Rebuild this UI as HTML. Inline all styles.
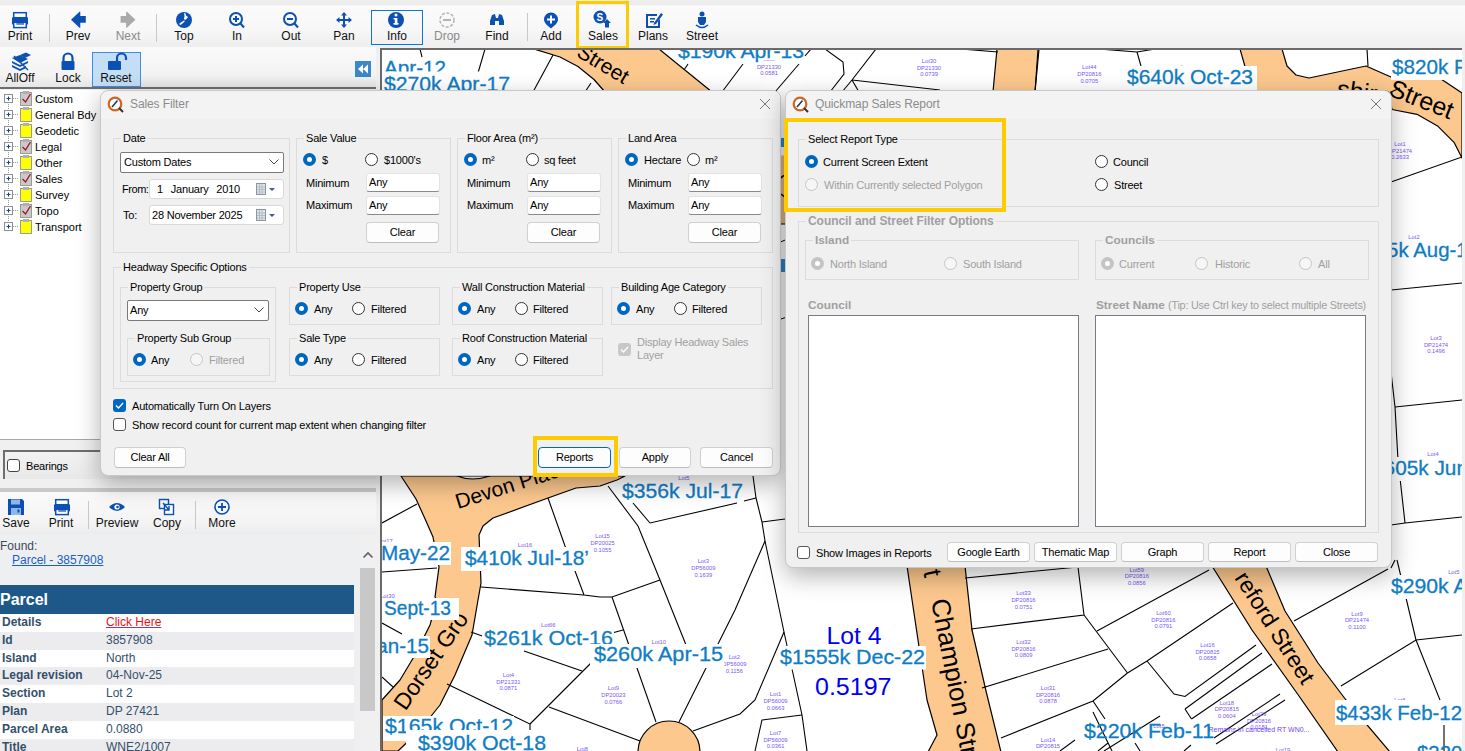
<!DOCTYPE html>
<html><head><meta charset="utf-8">
<style>
*{box-sizing:border-box;margin:0;padding:0}
html,body{width:1465px;height:751px;overflow:hidden;background:#f0f0f0;font-family:"Liberation Sans",sans-serif;font-size:12px;color:#000;position:relative}
.a{position:absolute}
.tb{left:0;top:0;width:1465px;height:47px;background:linear-gradient(#ededed 0,#ededed 5px,#fbfbfb 6px,#f7f7f7 30px,#efefef 46px)}
.ti{position:absolute;text-align:center;font-size:12px;color:#111}
.ti svg{position:absolute;left:50%;margin-left:-8px;top:12px}
.ti span{position:absolute;left:-30px;right:-30px;top:29px;text-align:center}
.sep{position:absolute;width:1px;background:#c8c8c8}
.map{left:380px;top:48px;width:1082px;height:703px;background:#fff;border-left:2px solid #6a6a6a;border-top:2px solid #6a6a6a;overflow:hidden}
.dlg{background:#f0f0f0;border:1px solid #c8c8c8;border-radius:8px;box-shadow:0 8px 24px rgba(0,0,0,.3)}
.grp{position:absolute;border:1px solid #dcdcdc}
.grp>b{position:absolute;top:-8px;left:7px;font-weight:normal;background:#f0f0f0;padding:0 2px;line-height:14px;white-space:nowrap;font-size:11px;letter-spacing:-0.2px}
.rad{position:absolute;width:13px;height:13px;border-radius:50%;border:1px solid #333;background:#fff}
.rad.on{border:4px solid #0067c0;background:#fff}
.rad.dis{border-color:#c4c4c4;background:#f6f6f6}
.rad.dison{border:4px solid #c4c4c4;background:#fff}
.lbl{position:absolute;white-space:nowrap;line-height:14px;font-size:11px;letter-spacing:-0.2px}
.btn{position:absolute;font-size:11px;letter-spacing:-0.2px;background:#fdfdfd;border:1px solid #d0d0d0;border-bottom-color:#bdbdbd;border-radius:4px;text-align:center;line-height:18px}
.inp{position:absolute;font-size:11px;letter-spacing:-0.2px;background:#fff;border:1px solid #e3e3e3;border-bottom:1px solid #8a8a8a;border-radius:3px;padding-left:2px;line-height:16px}
.dis{color:#a0a0a0}
.yel{position:absolute;border:3px solid #fccb00}
</style></head><body>

<!-- top toolbar -->
<div class="a tb"></div>
<!-- top toolbar items -->
<div class="a" style="left:0;top:0;width:1465px;height:47px">
<svg class="a" style="left:0;top:0" width="760" height="47" viewBox="0 0 760 47">
<g fill="#0c50b4">
<!-- print -->
<rect x="13.7" y="12.7" width="12.6" height="5" fill="#fff" stroke="#0c50b4" stroke-width="1.5"/>
<rect x="12" y="17.3" width="16" height="7.3" rx="0.8"/>
<rect x="13.7" y="22.3" width="12.6" height="5.3" fill="#fff" stroke="#0c50b4" stroke-width="1.5"/>
<rect x="16.3" y="23.3" width="7.7" height="1.3"/>
<!-- prev -->
<path d="M71,19.8 L79.5,11.8 L80.3,11.8 V16.1 H85.8 V22.7 H80.3 V27.7 L79.5,27.7 Z"/>
<!-- next -->
<path d="M135.4,19.8 L126.9,11.8 L126.1,11.8 V16.1 H120.6 V22.7 H126.1 V27.7 L126.9,27.7 Z" fill="#a9a9a9"/>
<!-- top -->
<circle cx="184" cy="20" r="8"/>
<path d="M184,13 L185.5,13.5 L186,15.5 L188,17 L186.5,19 L185,20 L184,19 L184.5,16 Z M185,21 L182.5,23.5 L180.5,25 L179,24 L181.5,22 L184,20.5 Z" fill="#fff"/>
<!-- in -->
<g fill="none" stroke="#0c50b4" stroke-width="2"><circle cx="236" cy="19" r="6"/><path d="M240.5,23.5 L244,27.5"/><path d="M236,16 V22 M233,19 H239"/></g>
<!-- out -->
<g fill="none" stroke="#0c50b4" stroke-width="2"><circle cx="290" cy="19" r="6"/><path d="M294.5,23.5 L298,27.5"/><path d="M287,19 H293"/></g>
<!-- pan -->
<g fill="none" stroke="#0c50b4" stroke-width="2"><path d="M344,14 V26 M338,20 H350"/></g>
<path d="M344,12 L347,15.5 L341,15.5 Z M344,28 L347,24.5 L341,24.5 Z M336,20 L339.5,17 L339.5,23 Z M352,20 L348.5,17 L348.5,23 Z"/>
<!-- info -->
<circle cx="396" cy="20" r="8"/>
<rect x="394.8" y="18" width="2.6" height="6.5" fill="#fff"/><rect x="393.5" y="23" width="5" height="1.6" fill="#fff"/><rect x="393.5" y="18" width="3" height="1.4" fill="#fff"/><circle cx="396" cy="15" r="1.5" fill="#fff"/>
<!-- drop -->
<circle cx="447" cy="20" r="7" fill="none" stroke="#b4b4b4" stroke-width="1.5" stroke-dasharray="3 1.6"/>
<rect x="443" y="19" width="8" height="2" fill="#b4b4b4"/>
<!-- find -->
<path d="M490,21 L492,15 L495,14 L496,18 L498,18 L499,14 L502,15 L504,21 L504,25 L499,25 L499,21 L495,21 L495,25 L490,25 Z"/>
<!-- add -->
<path d="M551,12.5 A7,7 0 0 1 558,19.5 C558,23 554,26 551,28.5 C548,26 544,23 544,19.5 A7,7 0 0 1 551,12.5 Z"/>
<path d="M550,15.5 h2 v3 h3 v2 h-3 v3 h-2 v-3 h-3 v-2 h3 Z" fill="#fff"/>
<!-- sales -->
<circle cx="600" cy="17" r="6.5"/>
<text x="596.5" y="21" font-size="10" font-weight="bold" fill="#fff" font-family="Liberation Sans">S</text>
<path d="M607,19 L611,23 L609,23 L609,27.5 L605,27.5 L605,23 L603,23 Z"/>
<!-- plans -->
<path d="M646,14 L657,14 L657,16 L648,16 L648,26 L658,26 L658,21 L660,19 L660,28 L646,28 Z"/>
<rect x="650" y="18" width="5" height="1.5"/><rect x="650" y="21" width="4" height="1.5"/>
<path d="M654,23 L661,13 L663,14.5 L656,24 L653.5,25 Z"/>
<!-- street -->
<circle cx="702" cy="14" r="2.5"/>
<path d="M698,17 L706,17 L706,22 L704,25 L700,25 L698,22 Z"/>
<path d="M696,25 Q702,30 708,25" fill="none" stroke="#0c50b4" stroke-width="1.6"/>
</g>
<g fill="#c8c8c8"><rect x="49" y="14" width="1" height="28"/><rect x="156" y="14" width="1" height="28"/><rect x="527" y="13" width="1" height="28"/></g>
</svg>
<div class="ti" style="left:20px;top:0"><span>Print</span></div>
<div class="ti" style="left:78px;top:0"><span>Prev</span></div>
<div class="ti" style="left:128px;top:0"><span style="color:#8a8a8a">Next</span></div>
<div class="ti" style="left:184px;top:0"><span>Top</span></div>
<div class="ti" style="left:237px;top:0"><span>In</span></div>
<div class="ti" style="left:291px;top:0"><span>Out</span></div>
<div class="ti" style="left:344px;top:0"><span>Pan</span></div>
<div class="a" style="left:371px;top:10px;width:52px;height:35px;border:1px solid #0a78d7"></div>
<div class="ti" style="left:397px;top:0"><span>Info</span></div>
<div class="ti" style="left:447px;top:0"><span style="color:#8a8a8a">Drop</span></div>
<div class="ti" style="left:497px;top:0"><span>Find</span></div>
<div class="ti" style="left:551px;top:0"><span>Add</span></div>
<div class="ti" style="left:603px;top:0"><span>Sales</span></div>
<div class="ti" style="left:653px;top:0"><span>Plans</span></div>
<div class="ti" style="left:702px;top:0"><span>Street</span></div>
<div class="yel" style="left:576px;top:1px;width:53px;height:48px"></div>
</div>


<!-- left panel -->
<div class="a" style="left:0;top:47px;width:376px;height:42px;background:linear-gradient(#fafafa,#f3f3f3 70%,#e6e6e6);border-bottom:2px solid #6e6e6e"></div>
<div class="a" style="left:0;top:90px;width:376px;height:350px;background:#fff"></div>
<!-- left toolbar row 2 -->
<div class="a" style="left:92px;top:52px;width:49px;height:35px;background:#c4def5;border:1px solid #3c8fde"></div>
<svg class="a" style="left:0;top:47px" width="380" height="42" viewBox="0 47 380 42">
<g fill="#0c50b4">
<!-- alloff layers -->
<path d="M20,55 L26,52.5 L31,55 L25,58 Z"/>
<path d="M12,58 L20,55 L28,59 L20,63 Z"/>
<path d="M12,61 L20,65 L28,61 L28,63 L20,67 L12,63 Z"/>
<path d="M12,65 L20,69 L26,66 L26,68 L20,71 L12,67 Z"/>
<path d="M14,56 L28,70" stroke="#0c50b4" stroke-width="1.4"/>
<!-- lock -->
<path d="M63.5,61 V58 A4.5,4.5 0 0 1 72.5,58 V61" fill="none" stroke="#0c50b4" stroke-width="2.2"/>
<rect x="61.5" y="61" width="13" height="9" rx="1"/>
<!-- reset open lock -->
<path d="M117,61 V58 A4.5,4.5 0 0 1 126,58 V60" fill="none" stroke="#0c50b4" stroke-width="2.2"/>
<rect x="108" y="61" width="13" height="9" rx="1"/>
</g>
<rect x="355" y="61" width="16" height="16" fill="#3d88c8"/>
<path d="M358,69 L363,64.5 L363,73.5 Z M363,69 L368,64.5 L368,73.5 Z" fill="#fff"/>
</svg>
<div class="ti" style="left:20px;top:47px;font-size:12px"><span style="top:24px">AllOff</span></div>
<div class="ti" style="left:68px;top:47px;font-size:12px"><span style="top:24px">Lock</span></div>
<div class="ti" style="left:116px;top:47px;font-size:12px"><span style="top:24px">Reset</span></div>

<!-- layer tree -->
<svg class="a" style="left:0;top:90px" width="100" height="150" viewBox="0 90 100 150">
<g fill="none" stroke="#9a9a9a" stroke-dasharray="1 1">
<path d="M8.5,104 V223"/>
</g>
<rect x="4.5" y="94.5" width="8" height="8" fill="#fff" stroke="#8f8f8f"/><path d="M6.5,98.5 h4 M8.5,96.5 v4" stroke="#1c3f8c" stroke-width="1"/><path d="M13,98.5 h5" stroke="#9a9a9a" stroke-dasharray="1 1"/><rect x="20.5" y="92.5" width="11" height="13" fill="#c9c9c9" stroke="#9a9a9a"/><rect x="23" y="91" width="6" height="3" fill="#b0b0b0"/><path d="M22.5,99 l3,3 l5,-8" fill="none" stroke="#9a1c1c" stroke-width="1.4"/><rect x="4.5" y="110.5" width="8" height="8" fill="#fff" stroke="#8f8f8f"/><path d="M6.5,114.5 h4 M8.5,112.5 v4" stroke="#1c3f8c" stroke-width="1"/><path d="M13,114.5 h5" stroke="#9a9a9a" stroke-dasharray="1 1"/><rect x="20.5" y="108.5" width="11" height="13" fill="#ffff00" stroke="#9a9a9a"/><rect x="23" y="107" width="6" height="3" fill="#b0b0b0"/><rect x="4.5" y="126.5" width="8" height="8" fill="#fff" stroke="#8f8f8f"/><path d="M6.5,130.5 h4 M8.5,128.5 v4" stroke="#1c3f8c" stroke-width="1"/><path d="M13,130.5 h5" stroke="#9a9a9a" stroke-dasharray="1 1"/><rect x="20.5" y="124.5" width="11" height="13" fill="#ffff00" stroke="#9a9a9a"/><rect x="23" y="123" width="6" height="3" fill="#b0b0b0"/><rect x="4.5" y="142.5" width="8" height="8" fill="#fff" stroke="#8f8f8f"/><path d="M6.5,146.5 h4 M8.5,144.5 v4" stroke="#1c3f8c" stroke-width="1"/><path d="M13,146.5 h5" stroke="#9a9a9a" stroke-dasharray="1 1"/><rect x="20.5" y="140.5" width="11" height="13" fill="#c9c9c9" stroke="#9a9a9a"/><rect x="23" y="139" width="6" height="3" fill="#b0b0b0"/><path d="M22.5,147 l3,3 l5,-8" fill="none" stroke="#9a1c1c" stroke-width="1.4"/><rect x="4.5" y="158.5" width="8" height="8" fill="#fff" stroke="#8f8f8f"/><path d="M6.5,162.5 h4 M8.5,160.5 v4" stroke="#1c3f8c" stroke-width="1"/><path d="M13,162.5 h5" stroke="#9a9a9a" stroke-dasharray="1 1"/><rect x="20.5" y="156.5" width="11" height="13" fill="#ffff00" stroke="#9a9a9a"/><rect x="23" y="155" width="6" height="3" fill="#b0b0b0"/><rect x="4.5" y="174.5" width="8" height="8" fill="#fff" stroke="#8f8f8f"/><path d="M6.5,178.5 h4 M8.5,176.5 v4" stroke="#1c3f8c" stroke-width="1"/><path d="M13,178.5 h5" stroke="#9a9a9a" stroke-dasharray="1 1"/><rect x="20.5" y="172.5" width="11" height="13" fill="#c9c9c9" stroke="#9a9a9a"/><rect x="23" y="171" width="6" height="3" fill="#b0b0b0"/><path d="M22.5,179 l3,3 l5,-8" fill="none" stroke="#9a1c1c" stroke-width="1.4"/><rect x="4.5" y="190.5" width="8" height="8" fill="#fff" stroke="#8f8f8f"/><path d="M6.5,194.5 h4 M8.5,192.5 v4" stroke="#1c3f8c" stroke-width="1"/><path d="M13,194.5 h5" stroke="#9a9a9a" stroke-dasharray="1 1"/><rect x="20.5" y="188.5" width="11" height="13" fill="#ffff00" stroke="#9a9a9a"/><rect x="23" y="187" width="6" height="3" fill="#b0b0b0"/><rect x="4.5" y="206.5" width="8" height="8" fill="#fff" stroke="#8f8f8f"/><path d="M6.5,210.5 h4 M8.5,208.5 v4" stroke="#1c3f8c" stroke-width="1"/><path d="M13,210.5 h5" stroke="#9a9a9a" stroke-dasharray="1 1"/><rect x="20.5" y="204.5" width="11" height="13" fill="#c9c9c9" stroke="#9a9a9a"/><rect x="23" y="203" width="6" height="3" fill="#b0b0b0"/><path d="M22.5,211 l3,3 l5,-8" fill="none" stroke="#9a1c1c" stroke-width="1.4"/><rect x="4.5" y="222.5" width="8" height="8" fill="#fff" stroke="#8f8f8f"/><path d="M6.5,226.5 h4 M8.5,224.5 v4" stroke="#1c3f8c" stroke-width="1"/><path d="M13,226.5 h5" stroke="#9a9a9a" stroke-dasharray="1 1"/><rect x="20.5" y="220.5" width="11" height="13" fill="#ffff00" stroke="#9a9a9a"/><rect x="23" y="219" width="6" height="3" fill="#b0b0b0"/>
</svg>
<div class="lbl" style="font-size:11px;letter-spacing:0;left:35px;top:91px;line-height:16px">Custom</div><div class="lbl" style="font-size:11px;letter-spacing:0;left:35px;top:107px;line-height:16px">General Bdy</div><div class="lbl" style="font-size:11px;letter-spacing:0;left:35px;top:123px;line-height:16px">Geodetic</div><div class="lbl" style="font-size:11px;letter-spacing:0;left:35px;top:139px;line-height:16px">Legal</div><div class="lbl" style="font-size:11px;letter-spacing:0;left:35px;top:155px;line-height:16px">Other</div><div class="lbl" style="font-size:11px;letter-spacing:0;left:35px;top:171px;line-height:16px">Sales</div><div class="lbl" style="font-size:11px;letter-spacing:0;left:35px;top:187px;line-height:16px">Survey</div><div class="lbl" style="font-size:11px;letter-spacing:0;left:35px;top:203px;line-height:16px">Topo</div><div class="lbl" style="font-size:11px;letter-spacing:0;left:35px;top:219px;line-height:16px">Transport</div>


<!-- left bottom -->
<div class="a" style="left:0;top:439px;width:376px;height:1px;background:#a8a8a8"></div>
<div class="a" style="left:3px;top:450px;width:373px;height:29px;border-top:2px solid #6e6e6e;border-left:2px solid #6e6e6e;background:linear-gradient(#f2f2f2,#e9e9e9)"></div>
<div class="a" style="left:7px;top:459px;width:13px;height:13px;background:#fff;border:1px solid #444;border-radius:3px"></div>
<div class="lbl" style="left:26px;top:459px;font-size:11px">Bearings</div>
<div class="a" style="left:0;top:488px;width:376px;height:4px;background:#c9c9c9"></div>
<div class="a" style="left:0;top:492px;width:376px;height:42px;background:linear-gradient(#fafafa,#f4f4f4 70%,#ececec)"></div>
<svg class="a" style="left:0;top:492px" width="260" height="42" viewBox="0 492 260 42">
<g fill="#0c50b4">
<!-- save -->
<path d="M8,499 H22 L24,501 V515 H8 Z"/>
<rect x="11" y="499.5" width="9" height="5" fill="#8fb6e6"/>
<rect x="11" y="508" width="10" height="7" fill="#8fb6e6"/><rect x="17.5" y="509.5" width="2" height="3" fill="#0c50b4"/>
<!-- print -->
<rect x="55.7" y="499.7" width="12.6" height="5" fill="#fff" stroke="#0c50b4" stroke-width="1.5"/>
<rect x="54" y="504.3" width="16" height="7.3" rx="0.8"/>
<rect x="55.7" y="509.3" width="12.6" height="5.3" fill="#fff" stroke="#0c50b4" stroke-width="1.5"/>
<rect x="58.3" y="510.3" width="7.7" height="1.3"/>
<!-- preview eye -->
<path d="M109,507 Q117,499 125,507 Q117,515 109,507 Z"/>
<circle cx="117" cy="507" r="2.6" fill="#fff"/><circle cx="117.5" cy="507" r="1.3"/>
<!-- copy -->
<rect x="159.5" y="499.5" width="9" height="9" fill="none" stroke="#0c50b4" stroke-width="1.4"/>
<rect x="164.5" y="504.5" width="9" height="10" fill="#fff" stroke="#0c50b4" stroke-width="1.4"/>
<path d="M163,503 L169,510 M169,506 V510 H165" fill="none" stroke="#0c50b4" stroke-width="1.4"/>
<!-- more -->
<circle cx="222" cy="507" r="7" fill="none" stroke="#0c50b4" stroke-width="1.6"/>
<path d="M222,503 V511 M218,507 H226" stroke="#0c50b4" stroke-width="1.8"/>
</g>
<g fill="#c8c8c8"><rect x="88" y="501" width="1" height="28"/><rect x="195" y="501" width="1" height="28"/></g>
</svg>
<div class="ti" style="left:16px;top:487px"><span>Save</span></div>
<div class="ti" style="left:61px;top:487px"><span>Print</span></div>
<div class="ti" style="left:117px;top:487px"><span>Preview</span></div>
<div class="ti" style="left:167px;top:487px"><span>Copy</span></div>
<div class="ti" style="left:222px;top:487px"><span>More</span></div>

<div class="a" style="left:0;top:534px;width:376px;height:217px;background:#eeeff1"></div>
<div class="a" style="left:360px;top:534px;width:16px;height:217px;background:#f0f0f0"></div>
<svg class="a" style="left:360px;top:549px" width="16" height="12" viewBox="0 0 16 12"><path d="M3.5,8.5 L8,4 L12.5,8.5" fill="none" stroke="#606060" stroke-width="1.6"/></svg>
<div class="a" style="left:360px;top:568px;width:15px;height:143px;background:#c8c8c8"></div>
<div class="a" style="left:0;top:539px;font-size:12px;color:#3a4a5c;line-height:14px">Found:</div>
<div class="a" style="left:12px;top:553px;font-size:12px;color:#1a5fc8;line-height:14px;text-decoration:underline">Parcel - 3857908</div>
<div class="a" style="left:0;top:585px;width:354px;height:29px;background:#1e5888"></div>
<div class="a" style="left:0;top:590px;font-size:16px;font-weight:bold;color:#fff;line-height:19px">Parcel</div>
<div class="a" style="left:0;top:614px;width:354px;height:137px;background:#fff"></div>
<div class="a" style="left:0;top:632px;width:354px;height:18px;background:#ececee"></div>
<div class="a" style="left:0;top:667px;width:354px;height:18px;background:#ececee"></div>
<div class="a" style="left:0;top:703px;width:354px;height:18px;background:#ececee"></div>
<div class="a" style="left:0;top:738.6px;width:354px;height:18px;background:#ececee"></div>
<div class="a" style="left:2px;top:614px;font-size:12px;font-weight:bold;color:#34506c;line-height:17.8px">Details<br>Id<br>Island<br>Legal revision<br>Section<br>Plan<br>Parcel Area<br>Title</div>
<div class="a" style="left:106px;top:614px;font-size:12px;color:#34506c;line-height:17.8px"><span style="color:#e8141c;text-decoration:underline;text-decoration-color:#8a3a9a">Click Here</span><br>3857908<br>North<br>04-Nov-25<br>Lot 2<br>DP 27421<br>0.0880<br>WNE2/1007</div>

<!-- map -->
<div class="a map"></div>
<svg class="a" style="left:382px;top:50px" width="1080" height="701" viewBox="382 50 1080 701">
<g fill="#fcc88e" stroke="#000" stroke-width="1.2" stroke-linejoin="round">
<!-- top street (diagonal) -->
<path d="M534,49 L560,57 L578,66.5 L594,79.5 L605,92 L712,92 L659,49 Z"/>
<!-- vertical road top -->
<path d="M997,49 L993,92 L1035,92 L1039,49 Z"/>
<!-- shire street top right -->
<path d="M1240,49 L1246,70 L1250,92 L1388,92 L1392,109.5 L1417,114.3 L1438,126.3 L1454,142.3 L1462,158 L1462,93 L1441,79 L1391,77 L1366,66 L1309,78 L1296,75 L1287,66 L1282,49 Z"/>

<!-- Devon / Dorset -->
<path d="M401,476 L416,499 L426,521 L433,537 L439,567 L435,597 L437,600 L430,625 L415,655 L400,680 L382,700 L382,751 L398,751 L420,730 L440,705 L455,675 L472,635 L478,600 L481,583 L479,535 L483,526 L493,518 L548,498 L576,488 L600,486 L617,480 L625,476 Z"/>
<path d="M457,476 Q472,482 490,476 Z" fill="#fff"/>
<!-- cul-de-sac -->
<circle cx="669" cy="752" r="31"/>
<!-- Champion street -->
<path d="M907,566 L918,640 L927,700 L937,735 L928,752 L1001,752 L986,691 L972,630 L965,566 Z"/>
<!-- Hereford street -->
<path d="M1212,566 L1252,630 L1299,696 L1338,752 L1390,752 L1346,700 L1318,663 L1285,611 L1266,566 Z"/>
</g>
<g fill="none" stroke="#000" stroke-width="1.1">
</g>
<rect x="775" y="155.5" width="15" height="68.5" fill="#e8b888"/>
<path d="M775,224 L790,224" stroke="#000" stroke-width="1"/>
<path d="M781,178 Q785,172 787,182 M781,194 L786,198" stroke="#000" stroke-width="1.6" fill="none"/>
<rect x="781" y="138" width="4" height="9" fill="#2a8ad0"/>
<rect x="781" y="259" width="4" height="13" fill="#2a8ad0"/>
<path d="M778,243 L790,238 M778,320 L790,316" stroke="#000" stroke-width="1"/>
<g fill="none" stroke="#000" stroke-width="1.1">
<!-- top strip lines -->
<path d="M420,49 L422,57"/>
<path d="M485,49 L478,73"/>
<path d="M553,55 L533,92"/><path d="M591,83 L585,92"/>
<path d="M688,64 L684,70"/>
<path d="M743,64 L722,92"/>

<path d="M811,49 L805,56"/>
<path d="M799,64 L775,92"/>
<path d="M825,49 L843,62 L844,74 L830,92"/>
<path d="M876,49 L852,80 L842,92"/>
<path d="M852,80 L940,90"/>
<path d="M852,80 L859,92"/>
<path d="M961,49 L998,52"/>
<path d="M1038,49 L1035,92"/>
<path d="M1099,49 L1137,52 L1155,49"/>
<path d="M1137,52 L1141,66"/>
<path d="M1367,49 L1368,66"/>
<path d="M1391,92 L1400,88"/>
<!-- right strip -->
<path d="M1391,182 L1462,157"/>
<path d="M1391,290 L1462,283"/>
<path d="M1391,372 L1395,407 L1398,460 L1405,523"/>
<path d="M1395,407 L1462,400"/>
<path d="M1391,525 L1405,523 L1462,517"/>
<path d="M1391,568 L1395,560"/>
<!-- bottom left -->
<path d="M382,523 L417,504"/>
<path d="M382,572 L437,568"/>
<path d="M548,498 L565,546 L575,571 L584,595 L600,597 L612,597 L660,580"/>
<path d="M481,587 L584,595"/>
<path d="M382,623 L402,634"/>
<path d="M382,677 L393,687"/>
<path d="M471,632 L485,637"/>
<path d="M524,651 L582,671"/>
<path d="M447,684 L530,724 L530,751"/>
<path d="M530,724 L592,662"/>
<path d="M549,707 L640,741"/>
<path d="M608,486 L638,526 L660,580 L672,610 L690,655"/>
<path d="M633,503 L650,523 L737,503"/>
<path d="M744,501 L756,498"/>
<path d="M753,476 L756,498 L762,522 L765,541 L784,632 L802,715 L807,751"/>
<path d="M762,522 L785,519"/>
<path d="M765,541 L735,610 L679,722"/>
<path d="M612,597 L656,722"/>

<path d="M784,632 L755,700 L740,714 L693,731"/>
<path d="M802,715 L762,720 L755,751"/>
<path d="M612,633 L623,630"/>
<!-- bottom middle -->


<path d="M965,578 L1078,567"/>
<path d="M1078,567 L1084,615 L971,629"/>
<path d="M1084,615 L1127.5,673"/>
<path d="M1097,631 L1209,570"/>
<path d="M982,688 L1108,649"/>
<path d="M1127.5,673 L1147,661 L1233,603"/>
<path d="M1001,738 L1093,701 L1127.5,673"/>
<path d="M1147,661 L1174,694 L1185,696.5 L1256,645"/>
<path d="M1185,709 L1262,653"/>
<path d="M1185,709 L1191.5,719"/>
<path d="M1191.5,719 L1272,664"/>
<path d="M1214,738 L1280,694"/>
<path d="M1216,744 L1285,700"/>
<path d="M1093,701 L1105,719"/>
<path d="M1098,751 L1108,743"/>
<path d="M1135,743 L1140,751"/>
<path d="M1184,751 L1191,745"/>
<path d="M1294,621 L1388,569"/>
<path d="M1341,686 L1416,640 L1462,635"/>
<path d="M1397,560 L1416,640 L1444,710 L1444,751"/>
<path d="M1104,751 L1160,716"/>
<path d="M1060,751 L1075,740"/>
<path d="M1093,712 L1112,751"/>
</g>
<g fill="#000" font-family="Liberation Sans">
<text transform="translate(575.6,55.7) rotate(31)" font-size="21">Street</text>
<text transform="translate(1336,97) rotate(8)" font-size="25">shire</text>
<text transform="translate(1387.5,95) rotate(21.5)" font-size="25">Street</text>
<text transform="translate(458,509) rotate(-17.5)" font-size="21">Devon Place</text>
<text transform="translate(405.5,711.4) rotate(-55.5)" font-size="23">Dorset Gro</text>
<text transform="translate(931,600.6) rotate(78.9)" font-size="26">Champion Street</text>
<text transform="translate(1234,578) rotate(57.6)" font-size="23">reford Street</text>
<text transform="translate(923.2,571.3) rotate(78.9)" font-size="26">t</text>
</g>
<g fill="#7a58f4" font-family="Liberation Sans" font-size="5.8" text-anchor="middle">
<text x="525" y="547.0">Lot16</text>
<text x="602.6" y="538.3">Lot15</text>
<text x="602.6" y="545.1">DP20025</text>
<text x="602.6" y="551.9">0.1055</text>
<text x="703.3" y="563.4">Lot3</text>
<text x="703.3" y="570.2">DP56009</text>
<text x="703.3" y="577.0">0.1639</text>
<text x="548.3" y="627.2">Lot66</text>
<text x="658.8" y="643.9">Lot10</text>
<text x="734.3" y="659.2">Lot2</text>
<text x="734.3" y="666.0">DP56009</text>
<text x="734.3" y="672.8">0.1156</text>
<text x="508.4" y="676.7">Lot4</text>
<text x="508.4" y="683.5">DP21331</text>
<text x="508.4" y="690.3">0.0871</text>
<text x="613.4" y="690.2">Lot9</text>
<text x="613.4" y="697.0">DP20023</text>
<text x="613.4" y="703.8">0.0766</text>
<text x="775.5" y="696.0">Lot1</text>
<text x="775.5" y="702.8">DP56009</text>
<text x="775.5" y="709.6">0.0663</text>
<text x="775.5" y="734.7">Lot7</text>
<text x="775.5" y="741.5">DP56009</text>
<text x="775.5" y="748.3">0.0361</text>
<text x="683.9" y="479.9">Lot5</text>
<text x="582.4" y="751.3">Lot8</text>
<text x="387.4" y="598.1">Lot30</text>
<text x="385.5" y="543.1">Lot17</text>
<text x="769" y="61.7">------</text>
<text x="769" y="68.5">DP21330</text>
<text x="769" y="75.3">0.0581</text>
<text x="929" y="62.7">Lot30</text>
<text x="929" y="69.5">DP21330</text>
<text x="929" y="76.3">0.0739</text>
<text x="1089.3" y="68.9">Lot44</text>
<text x="1089.3" y="75.7">DP20816</text>
<text x="1089.3" y="82.5">0.0705</text>
<text x="1400" y="145.7">Lot1</text>
<text x="1400" y="152.5">DP21474</text>
<text x="1400" y="159.3">0.2633</text>
<text x="1436" y="339.7">Lot3</text>
<text x="1436" y="346.5">DP21474</text>
<text x="1436" y="353.3">0.1496</text>
<text x="1433" y="455.5">Lot4</text>
<text x="1453.8" y="573.5">Lot5</text>
<text x="1414" y="238.5">Lot2</text>
<text x="1023.5" y="595.0">Lot33</text>
<text x="1023.5" y="601.8">DP20816</text>
<text x="1023.5" y="608.6">0.0751</text>
<text x="1023.5" y="643.7">Lot32</text>
<text x="1023.5" y="650.5">DP20816</text>
<text x="1023.5" y="657.3">0.0809</text>
<text x="1048" y="689.7">Lot31</text>
<text x="1048" y="696.5">DP20816</text>
<text x="1048" y="703.3">0.0878</text>
<text x="1136.8" y="571.6">Lot59</text>
<text x="1136.8" y="578.4">DP20816</text>
<text x="1136.8" y="585.2">0.0856</text>
<text x="1163.4" y="614.7">Lot60</text>
<text x="1163.4" y="621.5">DP20816</text>
<text x="1163.4" y="628.3">0.0791</text>
<text x="1207.5" y="646.7">Lot16</text>
<text x="1207.5" y="653.5">DP20815</text>
<text x="1207.5" y="660.3">0.0658</text>
<text x="1226.8" y="704.6">Lot18</text>
<text x="1226.8" y="711.4">DP20815</text>
<text x="1226.8" y="718.2">0.0604</text>
<text x="1259" y="715.7">Lot29</text>
<text x="1259" y="722.5">DP20816</text>
<text x="1259" y="729.3">0.0181</text>
<text x="1048" y="741.5">Lot14</text>
<text x="1048" y="748.3">DP20815</text>
<text x="1048" y="755.1">0.0762</text>
<text x="1357" y="615.5">Lot9</text>
<text x="1357" y="622.3">DP21474</text>
<text x="1357" y="629.1">0.1100</text>
<text x="1400" y="702.1">Lot6</text>
<text x="1283" y="752.1">Lot19</text>
<text x="1159" y="727.5">Lot5</text>
<text x="1185" y="68.5">Lot</text>
</g>
<text x="1259" y="732" fill="#7048f0" font-family="Liberation Sans" font-size="7" text-anchor="middle">Remains in cancelled RT WN0...</text>
<!-- labels with white bg -->
<g font-family="Liberation Sans">
<text x="384" y="74.6" font-size="20.5" fill="#0f7dc4" stroke="#0f7dc4" stroke-width="0.3" textLength="62" lengthAdjust="spacingAndGlyphs">Apr-12</text>
<rect x="382" y="71.5" width="130" height="22" fill="#fff"/>
<text x="384" y="90.6" font-size="20.5" fill="#0f7dc4" stroke="#0f7dc4" stroke-width="0.3" textLength="126" lengthAdjust="spacingAndGlyphs">$270k Apr-17</text>
<text x="678" y="58.3" font-size="20.5" fill="#0f7dc4" stroke="#0f7dc4" stroke-width="0.3" textLength="126" lengthAdjust="spacingAndGlyphs">$190k Apr-13</text>
<rect x="1126" y="66" width="131" height="26" fill="#fff"/>
<text x="1127" y="84" font-size="20.5" fill="#0f7dc4" stroke="#0f7dc4" stroke-width="0.3" textLength="126" lengthAdjust="spacingAndGlyphs">$640k Oct-23</text>
<rect x="1391" y="58" width="71" height="22" fill="#fff"/>
<text x="1392" y="74.3" font-size="20.5" fill="#0f7dc4" stroke="#0f7dc4" stroke-width="0.3" textLength="126" lengthAdjust="spacingAndGlyphs">$820k Feb-11</text>
<text x="1353" y="256.6" font-size="20.5" fill="#0f7dc4" stroke="#0f7dc4" stroke-width="0.3" textLength="126" lengthAdjust="spacingAndGlyphs">$385k Aug-19</text>
<rect x="1385" y="457" width="77" height="24" fill="#fff"/>
<text x="1372" y="475" font-size="20.5" fill="#0f7dc4" stroke="#0f7dc4" stroke-width="0.3" textLength="126" lengthAdjust="spacingAndGlyphs">$605k Jun-21</text>
<rect x="1389" y="575" width="73" height="24" fill="#fff"/>
<text x="1391" y="593" font-size="20.5" fill="#0f7dc4" stroke="#0f7dc4" stroke-width="0.3" textLength="126" lengthAdjust="spacingAndGlyphs">$290k Apr-20</text>
<text x="622" y="498" font-size="20.5" fill="#0f7dc4" stroke="#0f7dc4" stroke-width="0.3" textLength="121" lengthAdjust="spacingAndGlyphs">$356k Jul-17</text>
<rect x="381" y="542" width="70" height="23" fill="#fff"/>
<text x="381" y="560" font-size="20.5" fill="#0f7dc4" stroke="#0f7dc4" stroke-width="0.3" textLength="69" lengthAdjust="spacingAndGlyphs">May-22</text>
<rect x="461" y="547" width="129" height="24" fill="#fff"/>
<text x="465" y="564.7" font-size="20.5" fill="#0f7dc4" stroke="#0f7dc4" stroke-width="0.3" textLength="124" lengthAdjust="spacingAndGlyphs">$410k Jul-18’</text>
<rect x="381" y="598" width="78" height="22" fill="#fff"/>
<text x="384" y="615" font-size="20.5" fill="#0f7dc4" stroke="#0f7dc4" stroke-width="0.3" textLength="67" lengthAdjust="spacingAndGlyphs">Sept-13</text>
<rect x="482" y="627" width="132" height="23" fill="#fff"/>
<text x="484" y="645.3" font-size="20.5" fill="#0f7dc4" stroke="#0f7dc4" stroke-width="0.3" textLength="129" lengthAdjust="spacingAndGlyphs">$261k Oct-16</text>
<rect x="381" y="636" width="49" height="22" fill="#fff"/>
<text x="366" y="653.3" font-size="20.5" fill="#0f7dc4" stroke="#0f7dc4" stroke-width="0.3" textLength="63" lengthAdjust="spacingAndGlyphs">Jan-15</text>
<rect x="590" y="644" width="134" height="24" fill="#fff"/>
<text x="594" y="661" font-size="20.5" fill="#0f7dc4" stroke="#0f7dc4" stroke-width="0.3" textLength="129" lengthAdjust="spacingAndGlyphs">$260k Apr-15</text>
<rect x="383" y="716" width="131" height="25" fill="#fff"/>
<text x="385" y="733" font-size="20.5" fill="#0f7dc4" stroke="#0f7dc4" stroke-width="0.3" textLength="128" lengthAdjust="spacingAndGlyphs">$165k Oct-12</text>
<rect x="406" y="730" width="142" height="25" fill="#fff"/>
<text x="418" y="749.5" font-size="20.5" fill="#0f7dc4" stroke="#0f7dc4" stroke-width="0.3" textLength="128" lengthAdjust="spacingAndGlyphs">$390k Oct-18</text>
<rect x="780" y="646" width="146" height="23.5" fill="#fff"/>
<text x="780" y="664.1" font-size="19.5" fill="#0f7dc4" stroke="#0f7dc4" stroke-width="0.3" textLength="145" lengthAdjust="spacingAndGlyphs">$1555k Dec-22</text>
<text x="1084" y="738.4" font-size="20.5" fill="#0f7dc4" stroke="#0f7dc4" stroke-width="0.3" textLength="130" lengthAdjust="spacingAndGlyphs">$220k Feb-11</text>
<rect x="1335" y="700" width="127" height="25" fill="#fff"/>
<text x="1336" y="719.6" font-size="20.5" fill="#0f7dc4" stroke="#0f7dc4" stroke-width="0.3" textLength="126" lengthAdjust="spacingAndGlyphs">$433k Feb-12</text>
<text x="1417" y="759.6" font-size="20.5" fill="#0f7dc4" stroke="#0f7dc4" stroke-width="0.3" textLength="126" lengthAdjust="spacingAndGlyphs">$320k Mar-12</text>
</g>
<g fill="#0000f0" font-family="Liberation Sans" font-size="24px"><text x="826.5" y="644.4" textLength="55" lengthAdjust="spacingAndGlyphs">Lot 4</text><text x="815" y="694.7" textLength="76.5" lengthAdjust="spacingAndGlyphs">0.5197</text></g>

</svg>


<!-- Sales Filter dialog -->
<div class="a dlg" style="left:100px;top:90px;width:681px;height:386px"></div>
<div class="a" style="left:101px;top:91px;width:679px;height:28px;background:#f3f3f3;border-radius:8px 8px 0 0"></div>
<svg class="a" style="left:107px;top:96px" width="18" height="18" viewBox="0 0 18 18"><circle cx="8" cy="8" r="6.3" fill="#fff" stroke="#d0661c" stroke-width="2.2"/><path d="M5,11 L10.5,4.5" stroke="#1b3d7a" stroke-width="1.6"/><path d="M12,12 L16,16" stroke="#333" stroke-width="2"/></svg>
<div class="lbl" style="left:130px;top:97px;font-size:12px;color:#8c8c8c;letter-spacing:-0.1px">Sales Filter</div>
<svg class="a" style="left:759px;top:98px" width="12" height="12" viewBox="0 0 12 12"><path d="M1,1 L11,11 M11,1 L1,11" stroke="#777" stroke-width="1"/></svg>

<div class="grp" style="left:113px;top:138px;width:177px;height:115px"><b>Date</b></div>
<div class="inp" style="left:120px;top:152px;width:164px;height:21px;border:1px solid #7a7a7a;border-radius:2px;line-height:19px;padding-left:3px">Custom Dates</div>
<svg class="a" style="left:268px;top:158px" width="12" height="8" viewBox="0 0 12 8"><path d="M1.5,1.5 L6,6 L10.5,1.5" fill="none" stroke="#444" stroke-width="1"/></svg>
<div class="lbl" style="left:122px;top:182px;letter-spacing:-0.45px">From:</div>
<div class="inp" style="left:149px;top:179px;width:135px;height:20px;border:1px solid #d9d9d9;line-height:18px;padding-left:7px;word-spacing:5px">1 January 2010</div>
<div class="lbl" style="left:123px;top:208px">To:</div>
<div class="inp" style="left:149px;top:205px;width:135px;height:20px;border:1px solid #d9d9d9;line-height:18px;padding-left:2px">28 November 2025</div>
<svg class="a" style="left:256px;top:182px" width="22" height="40" viewBox="0 0 22 40"><g fill="#dfe4ea" stroke="#8b96a3"><rect x="0.5" y="1.5" width="9" height="11"/><rect x="0.5" y="27.5" width="9" height="11"/></g><g stroke="#a9b3bf" stroke-width="0.8"><path d="M1,5 H9 M1,7.5 H9 M1,10 H9 M3.5,2 V12 M6,2 V12 M1,31 H9 M1,33.5 H9 M1,36 H9 M3.5,28 V38 M6,28 V38"/></g><path d="M13,6 h6 l-3,3 Z M13,32 h6 l-3,3 Z" fill="#3d5f8a"/></svg>

<div class="grp" style="left:296px;top:138px;width:155px;height:115px"><b>Sale Value</b></div>
<div class="rad on" style="left:303px;top:153px"></div><div class="lbl" style="left:322px;top:153px">$</div>
<div class="rad" style="left:365px;top:153px"></div><div class="lbl" style="left:384px;top:153px">$1000's</div>
<div class="lbl" style="left:306px;top:176px">Minimum</div><div class="inp" style="left:366px;top:173px;width:74px;height:19px">Any</div>
<div class="lbl" style="left:306px;top:198px">Maximum</div><div class="inp" style="left:366px;top:196px;width:74px;height:19px">Any</div>
<div class="btn" style="left:366px;top:222px;width:73px;height:21px">Clear</div>

<div class="grp" style="left:457px;top:138px;width:155px;height:115px"><b>Floor Area (m²)</b></div>
<div class="rad on" style="left:464px;top:153px"></div><div class="lbl" style="left:482px;top:153px">m²</div>
<div class="rad" style="left:526px;top:153px"></div><div class="lbl" style="left:544px;top:153px">sq feet</div>
<div class="lbl" style="left:467px;top:176px">Minimum</div><div class="inp" style="left:527px;top:173px;width:74px;height:19px">Any</div>
<div class="lbl" style="left:467px;top:198px">Maximum</div><div class="inp" style="left:527px;top:196px;width:74px;height:19px">Any</div>
<div class="btn" style="left:527px;top:222px;width:73px;height:21px">Clear</div>

<div class="grp" style="left:618px;top:138px;width:155px;height:115px"><b>Land Area</b></div>
<div class="rad on" style="left:625px;top:153px"></div><div class="lbl" style="left:644px;top:153px">Hectare</div>
<div class="rad" style="left:687px;top:153px"></div><div class="lbl" style="left:705px;top:153px">m²</div>
<div class="lbl" style="left:628px;top:176px">Minimum</div><div class="inp" style="left:688px;top:173px;width:74px;height:19px">Any</div>
<div class="lbl" style="left:628px;top:198px">Maximum</div><div class="inp" style="left:688px;top:196px;width:74px;height:19px">Any</div>
<div class="btn" style="left:688px;top:222px;width:73px;height:21px">Clear</div>

<div class="grp" style="left:113px;top:267px;width:660px;height:122px"><b>Headway Specific Options</b></div>
<div class="grp" style="left:120px;top:287px;width:156px;height:95px"><b>Property Group</b></div>
<div class="inp" style="left:127px;top:300px;width:142px;height:21px;border:1px solid #7a7a7a;border-radius:2px;line-height:19px;padding-left:2px">Any</div>
<svg class="a" style="left:253px;top:306px" width="12" height="8" viewBox="0 0 12 8"><path d="M1.5,1.5 L6,6 L10.5,1.5" fill="none" stroke="#444" stroke-width="1"/></svg>
<div class="grp" style="left:127px;top:338px;width:143px;height:38px"><b>Property Sub Group</b></div>
<div class="rad on" style="left:133px;top:353px"></div><div class="lbl" style="left:151px;top:353px">Any</div>
<div class="rad dis" style="left:190px;top:353px"></div><div class="lbl dis" style="left:209px;top:353px">Filtered</div>

<div class="grp" style="left:289px;top:287px;width:151px;height:38px"><b>Property Use</b></div>
<div class="rad on" style="left:295px;top:302px"></div><div class="lbl" style="left:314px;top:302px">Any</div>
<div class="rad" style="left:352px;top:302px"></div><div class="lbl" style="left:371px;top:302px">Filtered</div>
<div class="grp" style="left:289px;top:338px;width:151px;height:38px"><b>Sale Type</b></div>
<div class="rad on" style="left:295px;top:353px"></div><div class="lbl" style="left:314px;top:353px">Any</div>
<div class="rad" style="left:352px;top:353px"></div><div class="lbl" style="left:371px;top:353px">Filtered</div>

<div class="grp" style="left:452px;top:287px;width:151px;height:38px"><b>Wall Construction Material</b></div>
<div class="rad on" style="left:458px;top:302px"></div><div class="lbl" style="left:477px;top:302px">Any</div>
<div class="rad" style="left:515px;top:302px"></div><div class="lbl" style="left:533px;top:302px">Filtered</div>
<div class="grp" style="left:452px;top:338px;width:151px;height:38px"><b>Roof Construction Material</b></div>
<div class="rad on" style="left:458px;top:353px"></div><div class="lbl" style="left:477px;top:353px">Any</div>
<div class="rad" style="left:515px;top:353px"></div><div class="lbl" style="left:533px;top:353px">Filtered</div>

<div class="grp" style="left:611px;top:287px;width:151px;height:38px"><b>Building Age Category</b></div>
<div class="rad on" style="left:617px;top:302px"></div><div class="lbl" style="left:636px;top:302px">Any</div>
<div class="rad" style="left:674px;top:302px"></div><div class="lbl" style="left:692px;top:302px">Filtered</div>
<div class="a" style="left:618px;top:343px;width:13px;height:13px;background:#c8c8c8;border-radius:3px"></div>
<svg class="a" style="left:618px;top:343px" width="13" height="13" viewBox="0 0 13 13"><path d="M3,6.5 L5.5,9 L10,4" fill="none" stroke="#fff" stroke-width="1.3"/></svg>
<div class="lbl dis" style="left:637px;top:336px;line-height:12.5px">Display Headway Sales<br>Layer</div>

<div class="a" style="left:113px;top:399px;width:13px;height:13px;background:#0067c0;border-radius:3px"></div>
<svg class="a" style="left:113px;top:399px" width="13" height="13" viewBox="0 0 13 13"><path d="M3,6.5 L5.5,9 L10,4" fill="none" stroke="#fff" stroke-width="1.3"/></svg>
<div class="lbl" style="left:132px;top:399px">Automatically Turn On Layers</div>
<div class="a" style="left:113px;top:418px;width:13px;height:13px;background:#fff;border:1px solid #555;border-radius:3px"></div>
<div class="lbl" style="left:132px;top:418px;letter-spacing:-0.15px">Show record count for current map extent when changing filter</div>

<div class="btn" style="left:114px;top:447px;width:72px;height:21px">Clear All</div>
<div class="btn" style="left:538px;top:447px;width:73px;height:21px;border:1px solid #0067c0">Reports</div>
<div class="btn" style="left:619px;top:447px;width:72px;height:21px">Apply</div>
<div class="btn" style="left:700px;top:447px;width:73px;height:21px">Cancel</div>
<div class="yel" style="left:533px;top:436px;width:85px;height:41px;border-width:4px"></div>


<!-- Sales Report dialog -->
<div class="a dlg" style="left:785px;top:90px;width:607px;height:478px"></div>
<div class="a" style="left:786px;top:91px;width:605px;height:28px;background:#f3f3f3;border-radius:8px 8px 0 0"></div>
<svg class="a" style="left:792px;top:96px" width="18" height="18" viewBox="0 0 18 18"><circle cx="8" cy="8" r="6.3" fill="#fff" stroke="#d0661c" stroke-width="2.2"/><path d="M5,11 L10.5,4.5" stroke="#1b3d7a" stroke-width="1.6"/><path d="M12,12 L16,16" stroke="#333" stroke-width="2"/></svg>
<div class="lbl" style="left:815px;top:97px;font-size:12px;color:#8c8c8c;letter-spacing:-0.1px">Quickmap Sales Report</div>
<svg class="a" style="left:1370px;top:98px" width="12" height="12" viewBox="0 0 12 12"><path d="M1,1 L11,11 M11,1 L1,11" stroke="#777" stroke-width="1"/></svg>

<div class="grp" style="left:798px;top:139px;width:581px;height:68px"><b>Select Report Type</b></div>
<div class="rad on" style="left:805px;top:155px"></div><div class="lbl" style="left:823px;top:155px">Current Screen Extent</div>
<div class="rad dis" style="left:805px;top:178px"></div><div class="lbl dis" style="left:824px;top:178px">Within Currently selected Polygon</div>
<div class="rad" style="left:1095px;top:155px"></div><div class="lbl" style="left:1113px;top:155px">Council</div>
<div class="rad" style="left:1095px;top:178px"></div><div class="lbl" style="left:1114px;top:178px">Street</div>

<div class="grp" style="left:798px;top:221px;width:581px;height:312px"><b class="dis" style="font-weight:bold;font-size:12px;letter-spacing:-0.05px">Council and Street Filter Options</b></div>
<div class="grp" style="left:805px;top:240px;width:274px;height:40px"><b class="dis" style="font-weight:bold;font-size:11.8px;letter-spacing:0">Island</b></div>
<div class="rad dison" style="left:811px;top:257px"></div><div class="lbl dis" style="left:830px;top:257px">North Island</div>
<div class="rad dis" style="left:944px;top:257px"></div><div class="lbl dis" style="left:963px;top:257px">South Island</div>
<div class="grp" style="left:1095px;top:240px;width:274px;height:40px"><b class="dis" style="font-weight:bold;font-size:11.8px;letter-spacing:0">Councils</b></div>
<div class="rad dison" style="left:1101px;top:257px"></div><div class="lbl dis" style="left:1119px;top:257px">Current</div>
<div class="rad dis" style="left:1195px;top:257px"></div><div class="lbl dis" style="left:1215px;top:257px">Historic</div>
<div class="rad dis" style="left:1299px;top:257px"></div><div class="lbl dis" style="left:1318px;top:257px">All</div>

<div class="lbl dis" style="left:808px;top:298px;font-weight:bold;font-size:11.8px;letter-spacing:0">Council</div>
<div class="lbl dis" style="left:1096px;top:298px;width:72px;overflow:hidden;font-weight:bold;font-size:11.8px;letter-spacing:0">Street Name</div><div class="lbl dis" style="left:1168px;top:298px;font-size:10.8px;letter-spacing:-0.2px">(Tip: Use Ctrl key to select multiple Streets)</div>
<div class="a" style="left:808px;top:315px;width:271px;height:212px;background:#fff;border:1px solid #7a7a84"></div>
<div class="a" style="left:1095px;top:315px;width:271px;height:212px;background:#fff;border:1px solid #7a7a84"></div>

<div class="a" style="left:797px;top:546px;width:13px;height:13px;background:#fff;border:1px solid #555;border-radius:3px"></div>
<div class="lbl" style="left:816px;top:546px;letter-spacing:-0.2px">Show Images in Reports</div>
<div class="btn" style="left:947px;top:542px;width:83px;height:20px">Google Earth</div>
<div class="btn" style="left:1034px;top:542px;width:83px;height:20px">Thematic Map</div>
<div class="btn" style="left:1121px;top:542px;width:83px;height:20px">Graph</div>
<div class="btn" style="left:1208px;top:542px;width:83px;height:20px">Report</div>
<div class="btn" style="left:1295px;top:542px;width:83px;height:20px">Close</div>

<div class="yel" style="left:784px;top:118px;width:222px;height:94px;border-width:4px 4px 4px 4px"></div>


</body></html>
